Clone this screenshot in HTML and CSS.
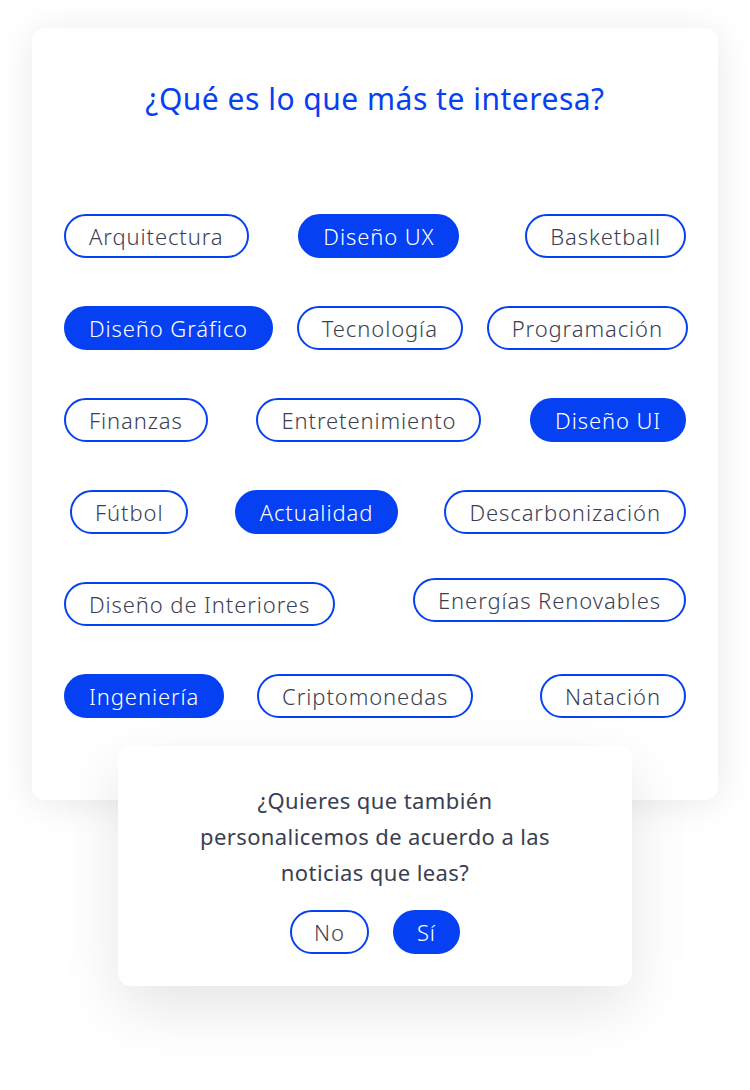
FILE: index.html
```html
<!DOCTYPE html>
<html lang="es">
  <head>
    <meta charset="utf-8">
    <meta name="viewport" content="width=device-width">
    <title>Intereses</title>
    <link rel="stylesheet" href="styles.css">
  </head>
  <body>
    <div class="page">
      <div class="card">
        <h1 class="title">¿Qué es lo que más te interesa?</h1>
        <div class="chips">
          <div class="row">
            <span class="chip">Arquitectura</span>
            <span class="chip on ux">Diseño UX</span>
            <span class="chip">Basketball</span>
          </div>
          <div class="row">
            <span class="chip on">Diseño Gráfico</span>
            <span class="chip">Tecnología</span>
            <span class="chip prog">Programación</span>
          </div>
          <div class="row">
            <span class="chip">Finanzas</span>
            <span class="chip">Entretenimiento</span>
            <span class="chip on">Diseño UI</span>
          </div>
          <div class="row">
            <span class="chip futbol">Fútbol</span>
            <span class="chip on">Actualidad</span>
            <span class="chip">Descarbonización</span>
          </div>
          <div class="row">
            <span class="chip">Diseño de Interiores</span>
            <span class="chip up">Energías Renovables</span>
          </div>
          <div class="row">
            <span class="chip on">Ingeniería</span>
            <span class="chip cripto">Criptomonedas</span>
            <span class="chip">Natación</span>
          </div>
        </div>
      </div>
      <div class="modal">
        <p class="question">¿Quieres que también<br>personalicemos de acuerdo a las<br>noticias que leas?</p>
        <div class="answers">
          <span class="chip small">No</span>
          <span class="chip small on">Sí</span>
        </div>
      </div>
    </div>
  </body>
</html>
```
FILE: styles.css
```css
body {
  margin: 0;
  background: #ffffff;
  font-family: "Noto Sans", "Open Sans", sans-serif;
  color: #3b3e52;
}
.page {
  width: 750px;
  min-height: 1090px;
  box-sizing: border-box;
  padding-top: 28px;
}
.card {
  margin-left: 32px;
  width: 686px;
  height: 772px;
  box-sizing: border-box;
  background: #fff;
  border-radius: 13px;
  box-shadow: 0 4px 36px rgba(0, 0, 0, 0.09);
  padding: 0 32px;
}
.title {
  margin: 0;
  padding-top: 50px;
  height: 134px;
  box-sizing: border-box;
  text-align: center;
  font-size: 30px;
  font-weight: 400;
  color: #0540f2;
  letter-spacing: 0.5px;
}
.chips {
  display: flex;
  flex-direction: column;
  gap: 48px;
  padding-top: 52px;
}
.row {
  display: flex;
  justify-content: space-between;
  align-items: flex-start;
}
.chip {
  display: inline-flex;
  align-items: center;
  justify-content: center;
  height: 44px;
  box-sizing: border-box;
  padding: 0 23px;
  border: 2px solid #0540f2;
  border-radius: 22px;
  font-size: 22px;
  font-weight: 300;
  letter-spacing: 0.9px;
  color: #3b3e52;
  white-space: nowrap;
}
.chip.on {
  background: #0540f2;
  color: #fff;
}
.ux { margin-right: 16px; }
.prog { margin-right: -2px; }
.futbol { margin-left: 6px; }
.up { margin-top: -4px; }
.cripto { margin-right: 34px; }
.modal {
  position: relative;
  margin: -54px 0 0 118px;
  width: 514px;
  height: 240px;
  box-sizing: border-box;
  background: #fff;
  border-radius: 13px;
  box-shadow: 0 22px 60px rgba(0, 0, 0, 0.1);
  padding-top: 36px;
  text-align: center;
}
.question {
  margin: 0;
  font-size: 22px;
  line-height: 36px;
  letter-spacing: 0.4px;
  color: #3b3e52;
}
.answers {
  display: flex;
  justify-content: center;
  gap: 24px;
  margin-top: 20px;
}
.chip.small {
  padding: 0 22px;
}
```
